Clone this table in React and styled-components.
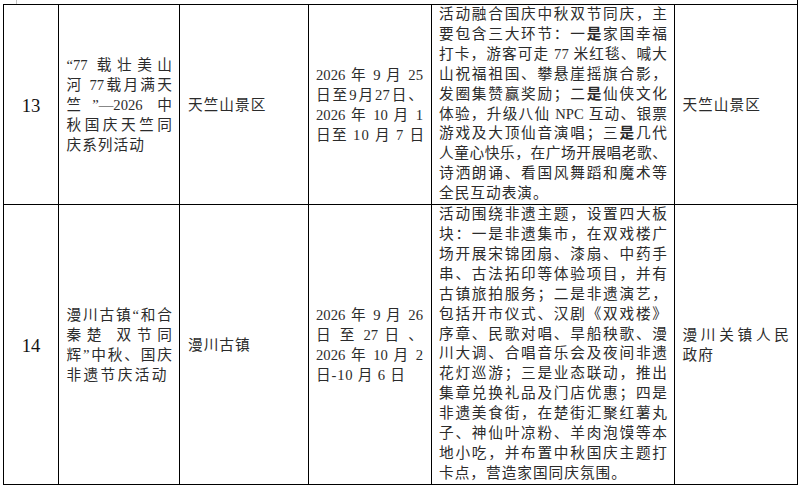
import React from "react";
import styled, { createGlobalStyle } from "styled-components";

const GlobalStyle = createGlobalStyle`
  html, body { margin: 0; padding: 0; background: #fff; }
  body {
    font-family: "Liberation Serif", "Noto Sans CJK SC", serif;
    color: #2b2b2b;
  }
`;

const Page = styled.div`
  padding-left: 3px;
  width: 795px;
`;

const Strip = styled.div`
  height: 4px;
  display: flex;
  justify-content: space-between;
  padding-left: 13px;
`;

const Tick = styled.div`
  width: 1px;
  background: ${(p) => p.$color};
`;

const Table = styled.div`
  display: grid;
  grid-template-columns: 55px 121px 129px 123px 243px 123px;
  border-top: 1px solid #000;
  border-left: 1px solid #000;
  width: max-content;
`;

const Cell = styled.div`
  box-sizing: border-box;
  border-right: 1px solid #000;
  border-bottom: 1px solid #000;
  display: flex;
  flex-direction: column;
  justify-content: center;
  padding: ${(p) => p.$pad};
  font-size: 14.67px;
  line-height: 19.9px;
`;

const NumCell = styled(Cell)`
  align-items: center;
  font-size: 18.7px;
  color: #111;
`;

const Line = styled.div`
  white-space: ${(p) => (p.$just ? "normal" : "nowrap")};
  text-align: ${(p) => (p.$just ? "justify" : "left")};
  text-align-last: ${(p) => (p.$just ? "justify" : "auto")};
  letter-spacing: ${(p) => p.$ls}px;
`;

const Strong = styled.b`
  font-weight: 700;
`;

function renderRich(s) {
  const parts = s.split(/\*(.)\*/);
  return parts.map((part, i) =>
    i % 2 === 1 ? <Strong key={i}>{part}</Strong> : <React.Fragment key={i}>{part}</React.Fragment>
  );
}

function Lines({ items }) {
  return items.map((it, i) => {
    const isObj = typeof it === "object";
    const text = isObj ? it.t : it;
    return (
      <Line key={i} $just={!isObj} $ls={isObj ? it.ls : 0}>
        {renderRich(text)}
      </Line>
    );
  });
}

const rows = [
  {
    no: "13",
    title: [
      "“77 载壮美山",
      "河 77载月满天",
      "竺”—2026 中",
      "秋国庆天竺同",
      { t: "庆系列活动", ls: 1 },
    ],
    place: [{ t: "天竺山景区", ls: 1 }],
    date: [
      "2026 年 9 月 25",
      "日至9月27日、",
      "2026 年 10 月 1",
      { t: "日至 10 月 7 日", ls: 1.3 },
    ],
    desc: [
      "活动融合国庆中秋双节同庆，主",
      "要包含三大环节：一*是*家国幸福",
      "打卡，游客可走 77 米红毯、喊大",
      "山祝福祖国、攀悬崖摇旗合影，",
      "发圈集赞赢奖励；二*是*仙侠文化",
      "体验，升级八仙 NPC 互动、银票",
      "游戏及大顶仙音演唱；三*是*几代",
      "人童心快乐，在广场开展唱老歌、",
      "诗洒朗诵、看国风舞蹈和魔术等",
      { t: "全民互动表演。", ls: 1 },
    ],
    org: [{ t: "天竺山景区", ls: 1 }],
  },
  {
    no: "14",
    title: [
      "漫川古镇“和合",
      "秦楚  双节同",
      "辉”中秋、国庆",
      { t: "非遗节庆活动", ls: 2.4 },
    ],
    place: [{ t: "漫川古镇", ls: 1 }],
    date: [
      "2026 年 9 月 26",
      "日 至 27 日 、",
      "2026 年 10 月 2",
      { t: "日-10 月 6 日", ls: 0.8 },
    ],
    desc: [
      "活动围绕非遗主题，设置四大板",
      "块：一是非遗集市，在双戏楼广",
      "场开展宋锦团扇、漆扇、中药手",
      "串、古法拓印等体验项目，并有",
      "古镇旅拍服务；二是非遗演艺，",
      "包括开市仪式、汉剧《双戏楼》",
      "序章、民歌对唱、旱船秧歌、漫",
      "川大调、合唱音乐会及夜间非遗",
      "花灯巡游；三是业态联动，推出",
      "集章兑换礼品及门店优惠；四是",
      "非遗美食街，在楚街汇聚红薯丸",
      "子、神仙叶凉粉、羊肉泡馍等本",
      "地小吃，并布置中秋国庆主题打",
      { t: "卡点，营造家国同庆氛围。", ls: 1 },
    ],
    org: ["漫川关镇人民", { t: "政府", ls: 1 }],
  },
];

export default function App() {
  return (
    <>
      <GlobalStyle />
      <Page>
        <Strip>
          <Tick $color="#c4c4c4" />
          <Tick $color="#000" />
        </Strip>
        <Table>
          {rows.map((r) => (
            <React.Fragment key={r.no}>
              <NumCell $pad="3px 0 0 0">{r.no}</NumCell>
              <Cell $pad="3px 7px 0 7.5px">
                <Lines items={r.title} />
              </Cell>
              <Cell $pad="3px 8px 0 8px">
                <Lines items={r.place} />
              </Cell>
              <Cell $pad="3px 8px 0 7px">
                <Lines items={r.date} />
              </Cell>
              <Cell $pad="0 7px 0 7px">
                <Lines items={r.desc} />
              </Cell>
              <Cell $pad="3px 8px 0 7.5px">
                <Lines items={r.org} />
              </Cell>
            </React.Fragment>
          ))}
        </Table>
      </Page>
    </>
  );
}
